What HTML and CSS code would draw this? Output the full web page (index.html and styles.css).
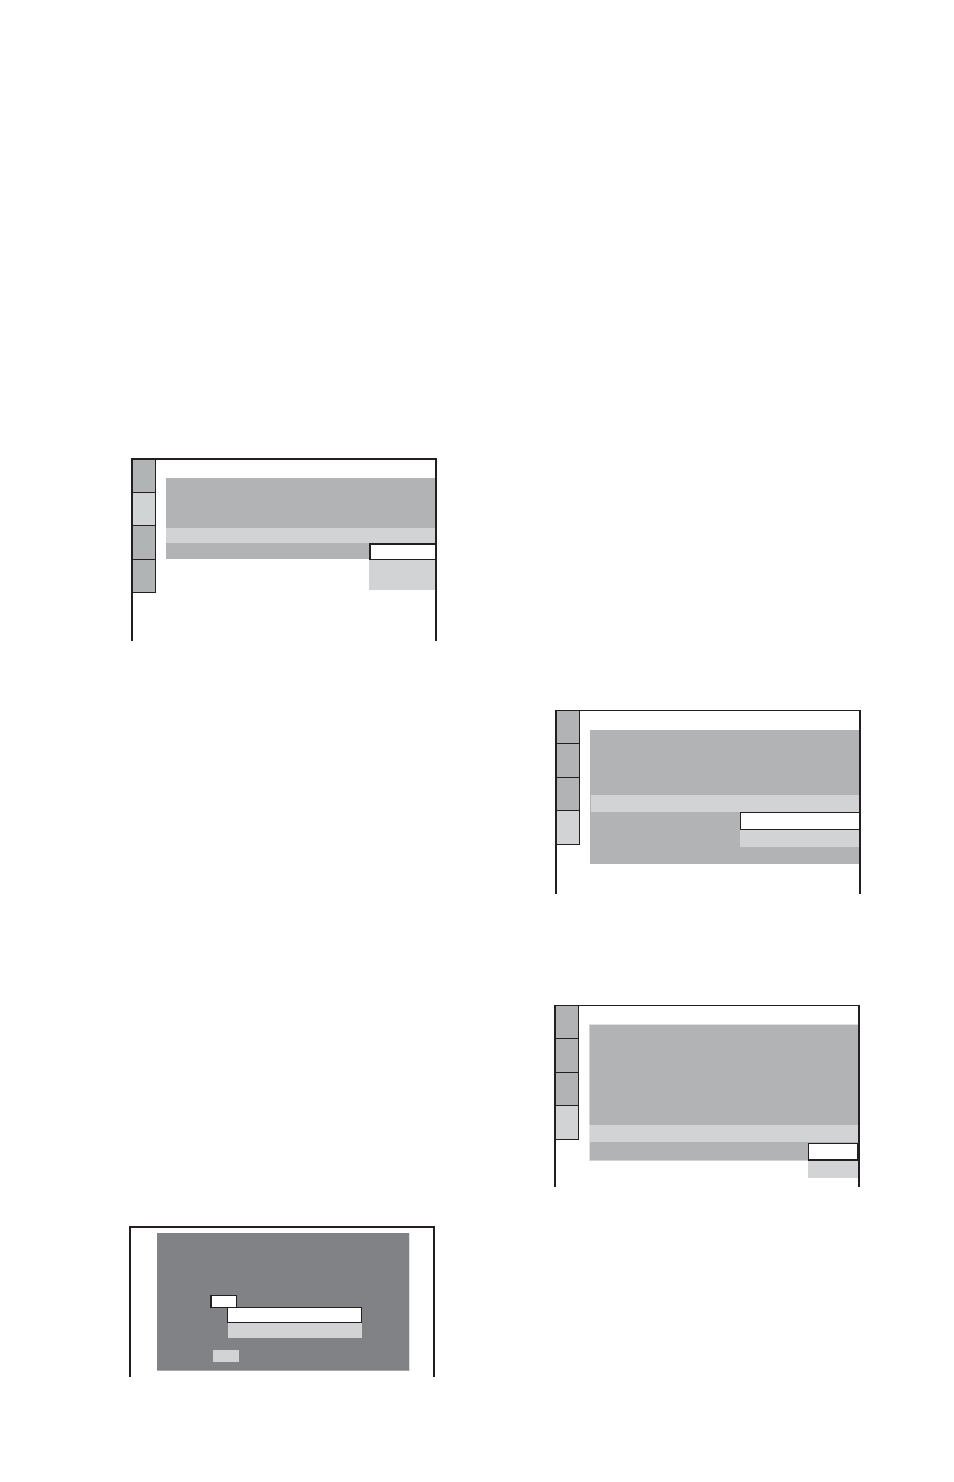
FILE: index.html
```html
<!DOCTYPE html>
<html lang="en">
<head>
<meta charset="utf-8">
<meta name="viewport" content="width=device-width, initial-scale=1">
<link rel="stylesheet" href="styles.css">
</head>
<body>
<main class="page">
  <div class="column column-left">
    <section class="screen screen-audio">
      <div class="tabs">
        <div class="tab"></div>
        <div class="tab tab-active"></div>
        <div class="tab tab-tall"></div>
        <div class="tab"></div>
      </div>
      <div class="content">
        <div class="block"></div>
        <div class="selected-row"></div>
        <div class="menu-row">
          <div class="rest"></div>
          <div class="menu">
            <div class="option-current"></div>
            <div class="option"></div>
          </div>
        </div>
      </div>
    </section>
    <section class="screen screen-dialog">
      <div class="dialog">
        <div class="field"></div>
        <div class="choices">
          <div class="option-current"></div>
          <div class="option"></div>
        </div>
        <div class="chip"></div>
      </div>
    </section>
  </div>
  <div class="column column-right">
    <section class="screen screen-thin screen-other">
      <div class="tabs">
        <div class="tab"></div>
        <div class="tab tab-tall"></div>
        <div class="tab"></div>
        <div class="tab tab-tall tab-active"></div>
      </div>
      <div class="content">
        <div class="block"></div>
        <div class="selected-row"></div>
        <div class="menu-row">
          <div class="rest"></div>
          <div class="menu">
            <div class="option-current"></div>
            <div class="option"></div>
          </div>
        </div>
      </div>
    </section>
    <section class="screen screen-thin screen-toggle">
      <div class="tabs">
        <div class="tab"></div>
        <div class="tab tab-tall"></div>
        <div class="tab"></div>
        <div class="tab tab-tall tab-active"></div>
      </div>
      <div class="content">
        <div class="block"></div>
        <div class="selected-row"></div>
        <div class="menu-row">
          <div class="rest"></div>
          <div class="menu">
            <div class="option-current"></div>
            <div class="option"></div>
          </div>
        </div>
      </div>
    </section>
  </div>
</main>
</body>
</html>
```
FILE: styles.css
```css
:root {
  --ink: #231f20;
  --mid: #b2b3b5;
  --light: #d1d3d4;
  --dark: #818285;
  --edge: #e1e2e3;
}

* {
  box-sizing: border-box;
}

body {
  margin: 0;
  background: #fff;
  font-family: "Liberation Sans", sans-serif;
}

.page {
  display: grid;
  grid-template-columns: 1fr 1fr;
  column-gap: 116px;
  padding: 0 93px 105px 129px;
}

.column {
  display: flex;
  flex-direction: column;
}

.column-left {
  padding-top: 458px;
  gap: 585px;
}

.column-right {
  padding-top: 710px;
  gap: 111px;
}

.screen {
  display: flex;
  align-items: flex-start;
  gap: 10px;
  border: 2px solid var(--ink);
  border-bottom: 0;
}

.screen-thin {
  border-top-width: 1px;
}

.tabs {
  flex: none;
  width: 23px;
  border-right: 1px solid var(--ink);
}

.tab {
  height: 33px;
  background: var(--mid);
  border-bottom: 1px solid var(--ink);
}

.tab-tall {
  height: 34px;
}

.tab-active {
  background: var(--light);
}

.content {
  flex: 1;
}

.block,
.rest {
  background: var(--mid);
}

.selected-row,
.option {
  background: var(--light);
}

.option-current {
  background: #fff;
  border: 1px solid var(--ink);
}

.menu-row {
  display: flex;
  align-items: flex-start;
}

.rest {
  flex: 1;
}

.menu {
  flex: none;
}

/* Three-line menu that hangs below its panel */
.screen-audio {
  margin-left: 2px;
  padding-bottom: 48px;
}

.screen-audio .content {
  padding-top: 18px;
}

.screen-audio .block {
  height: 50px;
}

.screen-audio .selected-row {
  height: 15px;
}

.screen-audio .rest {
  height: 16px;
}

.screen-audio .menu {
  width: 66px;
}

.screen-audio .option-current {
  height: 17px;
  border-width: 2px 0 1px 2px;
}

.screen-audio .option {
  height: 30px;
}

/* Wide menu inside its panel */
.screen-other {
  margin-left: 2px;
  padding-bottom: 30px;
}

.screen-other .content {
  padding-top: 19px;
}

.screen-other .block {
  height: 65px;
}

.screen-other .selected-row {
  height: 17px;
  border-left: 1px solid var(--mid);
}

.screen-other .menu-row {
  height: 52px;
  background: var(--mid);
}

.screen-other .menu {
  width: 119px;
}

.screen-other .option-current {
  height: 18px;
  border-right: 0;
}

.screen-other .option {
  height: 17px;
}

/* Two-line menu on the right edge */
.screen-toggle {
  margin: 0 1px;
  padding-bottom: 9px;
}

.screen-toggle .content {
  padding-top: 18px;
}

.screen-toggle .block {
  height: 101px;
  border-top: 1px solid var(--edge);
  border-left: 1px solid var(--light);
}

.screen-toggle .selected-row {
  height: 17px;
  border-left: 1px solid var(--edge);
}

.screen-toggle .rest {
  height: 19px;
  border-bottom: 1px solid var(--light);
  border-left: 1px solid var(--edge);
}

.screen-toggle .menu {
  width: 50px;
  border-top: 1px solid var(--mid);
}

.screen-toggle .option-current {
  height: 18px;
  border-bottom-width: 2px;
}

.screen-toggle .option {
  height: 17px;
}

/* Dark dialog */
.screen-dialog {
  margin-right: 2px;
  padding: 5px 23px 6px 26px;
}

.dialog {
  flex: 1;
  height: 138px;
  padding: 62px 47px 0 53px;
  background: var(--dark);
  border-right: 1px solid var(--edge);
  border-bottom: 1px solid #a8a9ab;
}

.field {
  width: 27px;
  height: 12px;
  background: #fff;
  border: 1px solid var(--ink);
  border-width: 1px 1px 0 2px;
}

.choices {
  margin-left: 17px;
}

.choices .option-current {
  height: 16px;
}

.choices .option {
  height: 15px;
  margin-left: 1px;
}

/* Closes the bottom edge of the field left of the choices */
.choices::before {
  content: "";
  position: absolute;
  width: 17px;
  height: 1px;
  margin-left: -17px;
  background: var(--ink);
}

.chip {
  width: 26px;
  height: 12px;
  margin: 12px 0 0 3px;
  background: var(--light);
}
```
